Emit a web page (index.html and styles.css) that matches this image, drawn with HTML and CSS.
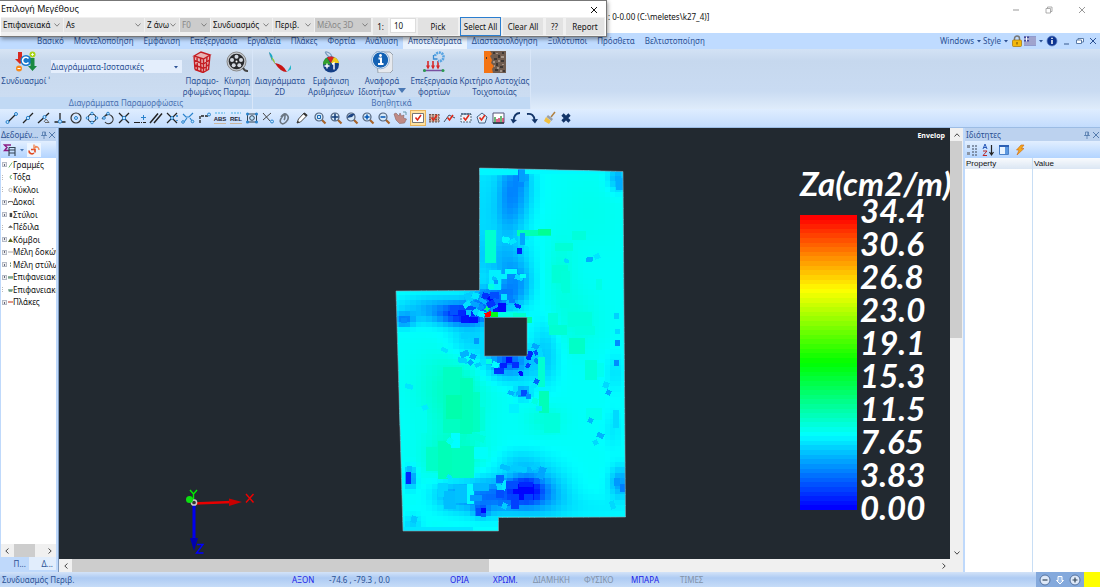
FILE: index.html
```html
<!DOCTYPE html>
<html lang="el">
<head>
<meta charset="utf-8">
<title>0-0.00 (C:\meletes\k27_4)</title>
<link rel="stylesheet" href="styles.css">
</head>
<body>
<svg class="sprite" aria-hidden="true">
  <symbol id="chev" viewBox="0 0 8 8"><path d="M1.5 2.5 4 5.2 6.500 2.500" fill="none" stroke="currentColor" stroke-width="0.9"/></symbol>
  <symbol id="tri" viewBox="0 0 8 8"><path d="M2 3h4L4 5.500z" fill="currentColor"/></symbol>
  <symbol id="close" viewBox="0 0 8 8"><path d="M1 1l6 6M7 1 1 7" fill="none" stroke="currentColor" stroke-width="1"/></symbol>
  <symbol id="pin" viewBox="0 0 8 8"><path d="M2.500 1h3v3.500h-3zM1 4.500h6M4 4.500V8M4.800 1v3.500" fill="none" stroke="currentColor" stroke-width=".8"/></symbol>
  <symbol id="lens" viewBox="0 0 16 14"><path d="m9.500 8.500 4 4" stroke="#a8642a" stroke-width="2.200"/><circle cx="7" cy="6" r="4" fill="#d4e8f8" stroke="#50627c" stroke-width="1.200"/></symbol>
  <symbol id="tick" viewBox="0 0 16 14"><path d="m5.500 6.500 2 2.500 3.500-5" fill="none" stroke="#e02818" stroke-width="1.500"/></symbol>
</svg>

<div class="app">
  <header class="titlebar">
    <h1 class="doc">: 0-0.00 (C:\meletes\k27_4)]</h1>
    <div class="winbtns">
      <button aria-label="Minimize"><svg viewBox="0 0 8 8"><path d="M1 4h6" stroke="#999" fill="none"/></svg></button>
      <button aria-label="Restore"><svg viewBox="0 0 8 8"><path d="M1 2.500h4.500V7H1zM2.500 2.500V1H7v4.500H5.500" stroke="#999" fill="none" stroke-width=".8"/></svg></button>
      <button aria-label="Close"><svg class="grey"><use href="#close"/></svg></button>
    </div>
  </header>

  <nav class="menubar">
    <div class="tabs">
      <button>Βασικό</button><button>Μοντελοποίηση</button><button>Εμφάνιση</button><button>Επεξεργασία</button><button>Εργαλεία</button><button>Πλάκες</button><button>Φορτία</button><button>Ανάλυση</button><button class="on">Αποτελέσματα</button><button>Διαστασιολόγηση</button><button>Ξυλότυποι</button><button>Πρόσθετα</button><button>Βελτιστοποίηση</button>
    </div>
    <div class="menuright">
      <button>Windows <svg class="c8"><use href="#tri"/></svg></button>
      <button>Style <svg class="c8"><use href="#tri"/></svg></button>
      <button aria-label="Lock"><svg class="m12" viewBox="0 0 12 12"><path d="M3.500 6V3.500a2.500 2.500 0 0 1 5 0V6" fill="none" stroke="#777" stroke-width="1.500"/><rect x="1.500" y="5" width="9" height="6.500" rx="1" fill="#f3b80c" stroke="#a47408" stroke-width=".7"/><path d="M6 7v2.500" stroke="#6a4a00"/></svg></button>
      <button aria-label="Language"><svg class="m12" viewBox="0 0 12 12"><path d="M0 1.500h12v9H0z" fill="#fff"/><path d="M0 2h12M0 4h12M0 6h12M0 8h12M0 10h12" stroke="#41489c"/><path d="M0 1.500h5v5H0z" fill="#41489c"/><path d="M2.500 1.500v5M0 4h5" stroke="#fff"/></svg><svg class="c8"><use href="#tri"/></svg></button>
      <button aria-label="Info"><svg class="m12" viewBox="0 0 12 12"><circle cx="6" cy="6" r="5" fill="#0d3490" stroke="#5d7fc4" stroke-width=".7"/><path d="M6 5v4M6 2.700v1.300" stroke="#fff" stroke-width="1.500"/></svg></button>
      <button aria-label="Minimize child"><svg class="c8" viewBox="0 0 8 8"><path d="M1 7h5" stroke="#4d6f9f" stroke-width="1.200"/></svg></button>
      <button aria-label="Restore child"><svg class="c8" viewBox="0 0 8 8"><path d="M.500 3h5v3.500h-5zM2 3V1.500h5.500V5h-2" fill="#fff" stroke="#4d6f9f" stroke-width=".9"/></svg></button>
      <button aria-label="Close child"><svg class="c8"><use href="#close"/></svg></button>
    </div>
  </nav>

  <section class="ribbon">
    <div class="group">
      <div class="items g1">
        <button class="big"><svg viewBox="0 0 22 22"><path d="M3 1h4v7h3L5 13 0 8h3z" fill="#d8291f"/><circle cx="4" cy="17.500" r="3" fill="#f58a1c"/><path d="M2.500 17.500h3" stroke="#fff"/><circle cx="11" cy="9.500" r="5.500" fill="#1879cc"/><path d="M13.500 7.500a3.300 3.300 0 1 0 0 4" fill="none" stroke="#fff" stroke-width="1.600"/><path d="M15.500 7h4v8H22l-4.500 5L13 15h2.500z" fill="#1a8a42"/><circle cx="17.500" cy="3.500" r="3" fill="#a8d418"/><path d="M16 3.500h3M17.500 2v3" stroke="#fff" stroke-width=".8"/></svg><span>Συνδυασμοί ˈ</span></button>
        <label class="combo"><select aria-label="Διάγραμμα"><option>Διαγράμματα-Ισοτασικές</option></select><svg class="c8"><use href="#tri"/></svg></label>
        <button class="big"><svg viewBox="0 0 22 22"><path d="M3 5 10 1l9 3-1.500 15-5.500 3-8-3.500z" fill="#e8b4b4"/><path d="M3 5 10 1l9 3-6.500 4zM3.500 9.500l9 3.500 6-4M4 14l8.500 3.500 5.500-4M4 18.500l8 3 5.500-3M3 5l1 13.500M6 6l.5 14M9.500 7l.5 14M12.500 8v13.500M16 6l-1 14M19 4l-1.500 15" fill="none" stroke="#c41c22" stroke-width="1.400"/></svg><span>Παραμο-<br>ρφωμένος</span></button>
        <button class="big"><svg viewBox="0 0 22 22"><circle cx="10.500" cy="10.500" r="9.500" fill="#c4c8ce" stroke="#888"/><circle cx="10.500" cy="10.500" r="7.800" fill="#28292c"/><g fill="#d5dae2"><circle cx="10.500" cy="5.700" r="2"/><circle cx="15" cy="9" r="2"/><circle cx="13.300" cy="14.300" r="2"/><circle cx="7.700" cy="14.300" r="2"/><circle cx="6" cy="9" r="2"/></g><circle cx="10.500" cy="10.500" r="1" fill="#fff"/><path d="M17 17q2 3.500 5 3" fill="none" stroke="#444" stroke-width="2"/></svg><span>Κίνηση<br>Παραμ.</span></button>
      </div>
      <h2>Διαγράμματα Παραμορφώσεις</h2>
    </div>
    <div class="group">
      <div class="items g2">
        <button class="big"><svg viewBox="0 0 22 22"><path d="M0 1q2 9 10 15" fill="none" stroke="#789" stroke-width=".6"/><path d="M0 1q5 3 3 9Z" fill="#13a6c4"/><path d="M2 6q4 2 4 7z" fill="#8cc820"/><path d="M6 12q8 1 12 9-7 0-12-9z" fill="#c81414"/><path d="M18 21l4-7 .4 4z" fill="#22b8cc"/></svg><span>Διαγράμματα<br>2D</span></button>
        <button class="big"><svg viewBox="0 0 22 22"><path d="M9 6Q3 0 7 1t5 5" fill="none" stroke="#7a9cc0" stroke-width="1.200"/><circle cx="11" cy="13.500" r="8" fill="#143f86"/><path d="M11 13.500H3a8 8 0 0 1 4-7z" fill="#32a02c"/><path d="M11 12 7 6.600a8 8 0 0 1 7-.5z" fill="#d82420"/><path d="m11 12 3-6a8 8 0 0 1 5 6z" fill="#f0cc18"/><path d="M4.500 15h5M7 12.500v5M12 13l2-1v6.500" stroke="#fff" stroke-width="1.400" fill="none"/></svg><span>Εμφάνιση<br>Αριθμήσεων</span></button>
        <button class="big"><svg viewBox="0 0 22 22"><path d="M5 1h14l3 3v15l-3 3H7z" fill="#e6e9ee" stroke="#98a2ae"/><circle cx="9.500" cy="9" r="8.300" fill="#1462b4" stroke="#fff" stroke-width="1.200"/><circle cx="9.500" cy="9" r="8.800" fill="none" stroke="#487eb8" stroke-width=".6"/><circle cx="9.500" cy="4.500" r="1.400" fill="#fff"/><path d="M7.500 7.500h2.500V13m-3 0h5.500" stroke="#fff" stroke-width="2" fill="none"/></svg><span>Αναφορά<br>Ιδιοτήτων <svg class="c8 dn"><path d="M0 1h8L4 6z" fill="#4a78b4"/></svg></span></button>
        <button class="big"><svg viewBox="0 0 22 22"><path d="M0 19.500h20" stroke="#7a50a0" stroke-width="1.500"/><circle cx="1.500" cy="19.500" r="1.500" fill="#2a9b50"/><circle cx="20" cy="19.500" r="1.500" fill="#2a9b50"/><path d="M5 10v7M10 10v7M15 10v7" stroke="#d82828" stroke-width="1.600"/><path d="M3 14.500h4l-2 4zM8 14.500h4l-2 4zM13 14.500h4l-2 4z" fill="#d82828"/><path d="M12 5a4.300 4.300 0 1 1 3 5" fill="none" stroke="#58a4e2" stroke-width="2.600" stroke-dasharray="2 .7"/><path d="M10.500 4v4h4" fill="none" stroke="#388ad2" stroke-width="1.300"/></svg><span>Επεξεργασία<br>φορτίων</span></button>
        <button class="big"><svg viewBox="0 0 22 22"><path d="M0 0h22v22H0z" fill="#705d50"/><path d="M0 0h6l2 3-2 2 2 4-1 3 3 3-2 3 1 4H0z" fill="#f47414"/><g fill="#3e3834"><path d="M9 1h2v2H9zM14 4h2v3h-2zM18 1h2v2h-2zM10 7h3v2h-3zM17 9h3v2h-3zM12 12h2v3h-2zM16 15h3v2h-3zM11 18h3v2h-3zM19 19h2v2h-2zM2 6h1v2H2z"/></g><g fill="#a39488"><path d="M12 2h2v1h-2zM17 5h3v2h-3zM9 10h2v2H9zM14 9h2v2h-2zM18 13h2v1h-2zM13 16h2v2h-2zM10 14h1v2h-1zM16 19h2v2h-2z"/></g></svg><span>Κριτήριο Αστοχίας<br>Τοιχοποιίας</span></button>
      </div>
      <h2>Βοηθητικά</h2>
    </div>
  </section>

  <div class="toolbar" role="toolbar" aria-label="Snap">
    <div class="set">
      <button aria-label="Line end"><svg viewBox="0 0 16 14"><path d="M3 12 12 3" stroke="#222" stroke-width="1.300"/><g fill="#bfe4ff" stroke="#2a82cc"><circle cx="3.500" cy="11" r="1.500"/><circle cx="12" cy="3" r="1.500"/></g></svg></button>
      <button aria-label="Midpoint"><svg viewBox="0 0 16 14"><path d="M3 12 13 2" stroke="#222" stroke-width="1.300"/><circle cx="8" cy="7" r="1.700" fill="#bfe4ff" stroke="#2a82cc"/></svg></button>
      <button aria-label="Nearest"><svg viewBox="0 0 16 14"><path d="M2 12 13 2" stroke="#222" stroke-width="1.300"/><circle cx="8.500" cy="6" r="1.500" fill="#bfe4ff" stroke="#2a82cc"/><path d="M8 11l2-3 3 3.500h-4" stroke="#666" fill="none"/></svg></button>
      <button aria-label="Perpendicular"><svg viewBox="0 0 16 14"><path d="M8 2v9M2.500 11h11" stroke="#222" stroke-width="1.300"/><circle cx="8" cy="10.500" r="1.700" fill="#bfe4ff" stroke="#2a82cc"/></svg></button>
      <button aria-label="Centre"><svg viewBox="0 0 16 14"><circle cx="8" cy="7" r="5" fill="none" stroke="#333" stroke-width="1.200"/><circle cx="8" cy="7" r="1.500" fill="#bfe4ff" stroke="#2a82cc"/></svg></button>
      <button aria-label="Quadrant"><svg viewBox="0 0 16 14"><circle cx="8" cy="7" r="4" fill="none" stroke="#333"/><g fill="#bfe4ff" stroke="#2a82cc"><circle cx="8" cy="2.500" r="1.300"/><circle cx="8" cy="11.500" r="1.300"/><circle cx="3.500" cy="7" r="1.300"/><circle cx="12.500" cy="7" r="1.300"/></g></svg></button>
      <button aria-label="Tangent"><svg viewBox="0 0 16 14"><path d="M2 8 8 2M5 11a4.500 4.500 0 1 0 1-6.500" fill="none" stroke="#333" stroke-width="1.200"/><circle cx="8" cy="2.500" r="1.300" fill="#bfe4ff" stroke="#2a82cc"/><circle cx="4" cy="7" r="1.300" fill="#bfe4ff" stroke="#2a82cc"/></svg></button>
      <button aria-label="Intersection"><svg viewBox="0 0 16 14"><path d="m3 2 10 10M13 2 3 12" stroke="#222" stroke-width="1.300"/><circle cx="8" cy="7" r="1.700" fill="#bfe4ff" stroke="#2a82cc"/></svg></button>
      <button aria-label="Extension"><svg viewBox="0 0 16 14"><path d="M2 11.500h6m1 0h1m1 0h3" stroke="#222"/><path d="M9 6.500h5M11.500 4v5" stroke="#2a82cc"/></svg></button>
      <button aria-label="Parallel"><svg viewBox="0 0 16 14"><path d="m2 12 8-9.500M6 12l8-9.500" stroke="#222" stroke-width="1.500"/></svg></button>
      <button aria-label="Apparent intersection"><svg viewBox="0 0 16 14"><path d="m3 2 10 10M13 2 3 12" stroke="#222" stroke-width="1.200"/><circle cx="8" cy="7" r="1.500" fill="#bfe4ff" stroke="#2a82cc"/><path d="M13 4v2M13 9v1" stroke="#2a82cc" stroke-width="1.500"/></svg></button>
      <button aria-label="Link nodes"><svg viewBox="0 0 16 14"><path d="M3 3l3 3h3l4-4M4 11l3-4M10 7l2 3" stroke="#2a82cc" fill="none" stroke-width="1.200"/><g fill="#bfe4ff" stroke="#2a82cc"><circle cx="3" cy="11" r="1.300"/><circle cx="12.500" cy="10.500" r="1.300"/></g></svg></button>
      <button aria-label="Ortho"><svg viewBox="0 0 16 14"><path d="M4 12V5h8" stroke="#222" fill="none" stroke-dasharray="3 1" stroke-width="1.300"/><circle cx="13" cy="3.500" r="1.500" fill="#bfe4ff" stroke="#2a82cc"/></svg></button>
      <button aria-label="Absolute"><svg viewBox="0 0 16 14"><path d="M3 2h10" stroke="#4bb0e4" stroke-dasharray="2 1"/><path d="M2 12.500h12" stroke="#ccb8a0"/><text x="8" y="9.500" text-anchor="middle" class="tiny">ABS</text></svg></button>
      <button aria-label="Relative"><svg viewBox="0 0 16 14"><path d="M3 2h10" stroke="#4bb0e4" stroke-dasharray="2 1"/><path d="M2 12.500h12" stroke="#ccb8a0"/><text x="8" y="9.500" text-anchor="middle" class="tiny">REL</text></svg></button>
      <button aria-label="Frame"><svg viewBox="0 0 16 14"><path d="M3.500 3h9v8h-9z" fill="none" stroke="#345"/><circle cx="8" cy="7" r="2.300" fill="#bfe4ff" stroke="#345"/><g fill="#2a82cc"><circle cx="3.500" cy="3" r="1.500"/><circle cx="12.500" cy="3" r="1.500"/><circle cx="3.500" cy="11" r="1.500"/><circle cx="12.500" cy="11" r="1.500"/></g></svg></button>
      <button aria-label="Clear snap"><svg viewBox="0 0 16 14"><path d="m3 2 7 8M11 2 3 9" stroke="#444"/><circle cx="12" cy="10.500" r="1.500" fill="#bfe4ff" stroke="#2a82cc"/></svg></button>
      <button aria-label="Attach"><svg viewBox="0 0 16 14"><path d="M5 6q3-5 6-2t-1 7q-3 3-5 1t1-6 3-1-1 4" fill="none" stroke="#6b7682" stroke-width="1.600"/></svg></button>
    </div>
    <div class="set">
      <button aria-label="Pencil"><svg viewBox="0 0 16 14"><path d="m3 12 1.500-4L10 2l3 2.500L6.500 11z" fill="#fff" stroke="#444"/><path d="m3 12 .8-2.200L5.500 11.300zM9 3l3 2.500 1.500-1.500-3-2.500z" fill="#333"/></svg></button>
    </div>
    <div class="set">
      <button aria-label="Zoom window"><svg viewBox="0 0 16 14"><use href="#lens"/><path d="M5.500 4.500h3v3h-3z" fill="none" stroke="#1768b4"/></svg></button>
      <button aria-label="Zoom all"><svg viewBox="0 0 16 14"><use href="#lens"/><path d="M7 2.500v7M3.500 6h7" stroke="#123c78" stroke-width="1.500"/></svg></button>
      <button aria-label="Zoom previous"><svg viewBox="0 0 16 14"><use href="#lens"/><path d="M3 7q2-5 8-4L8 6z" fill="#1c4484"/></svg></button>
      <button aria-label="Zoom in"><svg viewBox="0 0 16 14"><use href="#lens"/><path d="M7 3.500v5M4.500 6h5" stroke="#0054b4" stroke-width="1.500"/></svg></button>
      <button aria-label="Zoom out"><svg viewBox="0 0 16 14"><use href="#lens"/><path d="M4.500 6h5" stroke="#0054b4" stroke-width="1.500"/></svg></button>
      <button aria-label="Pan"><svg viewBox="0 0 16 14"><path d="m2 3 2-1 3 3 1-3 1.500 3L12 4l-.5 3 3 1-2 4-5 .5L4 9z" fill="#c08a84" stroke="#866" stroke-width=".6"/><path d="M11 1h3v3" fill="none" stroke="#69a"/></svg></button>
    </div>
    <div class="set">
      <button class="hot" aria-label="Select"><svg viewBox="0 0 16 14"><path d="M2.500 2.500h11v9h-11z" fill="#fff" stroke="#777"/><use href="#tick"/></svg></button>
      <button aria-label="Select mesh"><svg viewBox="0 0 16 14"><path d="M3 3h10v8H3z" fill="#dcb8a8"/><path d="M3 3.500h10M3 6h10M3 8.500h10M3 11h10M4 3v8M7 3v8M10 3v8M13 3v8" stroke="#6c5a54" stroke-dasharray="2 1"/><use href="#tick"/></svg></button>
      <button aria-label="Select polyline"><svg viewBox="0 0 16 14"><path d="m2 11 5-7 6 3" fill="none" stroke="#456"/><use href="#tick"/></svg></button>
      <button aria-label="Select box"><svg viewBox="0 0 16 14"><path d="M3 3h10v8H3z" fill="#e8f1fa" stroke="#567" stroke-dasharray="2 1"/><path d="M3 3h10" stroke="#246"/><use href="#tick"/></svg></button>
      <button aria-label="Select polygon"><svg viewBox="0 0 16 14"><path d="m8 2 5 4-2 6H5L3 6z" fill="#e4effa" stroke="#468"/><use href="#tick"/></svg></button>
      <button aria-label="Filter"><svg viewBox="0 0 16 14"><path d="M3 2h11v10H3z" fill="#fff" stroke="#557"/><path d="M5 6v6M11 5v7" stroke="#3ca048" stroke-width="1.500"/><path d="M7 8v4M9 7v5M13 7v5" stroke="#d43060" stroke-width="1.500"/><path d="M3 12h11" stroke="#234" stroke-width="1.500"/></svg></button>
    </div>
    <div class="set">
      <button aria-label="Undo"><svg viewBox="0 0 16 14"><path d="M12 2Q6 2 5.500 10" fill="none" stroke="#123468" stroke-width="1.800"/><path d="M2.500 8 5 12.500 9 9z" fill="#123468"/></svg></button>
      <button aria-label="Redo"><svg viewBox="0 0 16 14"><path d="M3 3q7-1 7.500 6" fill="none" stroke="#123468" stroke-width="1.800"/><path d="M7.500 8.500 11 12.500l3-4.500z" fill="#123468"/></svg></button>
    </div>
    <div class="set">
      <button aria-label="Brush"><svg viewBox="0 0 16 14"><path d="m13 1-4 5" stroke="#b08040" stroke-width="1.500"/><path d="m4 6 5 4-2 3-5-3z" fill="#f0c040"/><path d="m6 4 5 4-1.500 2-5-4z" fill="#999fa8"/></svg></button>
      <button aria-label="Delete"><svg viewBox="0 0 16 14"><path d="m4.500 3.500 7 7m0-7-7 7" stroke="#123468" stroke-width="3.200"/></svg></button>
    </div>
  </div>

  <main class="work">
    <aside class="left">
      <div class="phead"><h2>Δεδομέν...</h2><button aria-label="Pin"><svg class="c8"><use href="#pin"/></svg></button><button aria-label="Close panel"><svg class="c8"><use href="#close"/></svg></button></div>
      <div class="ptools">
        <button aria-label="Layers"><svg class="i14" viewBox="0 0 14 14"><path d="M8 2 1.500 2 4 4.500 1.500 7.500h5" fill="none" stroke="#8c1c84" stroke-width="1.500"/><path d="M6 4.500h6v8.500M6 7h6M6 10h6M6 4.500V13" fill="none" stroke="#345" stroke-width="1.100"/></svg></button><svg class="c8 blue"><use href="#tri"/></svg>
        <button class="refresh" aria-label="Refresh"><svg class="i14" viewBox="0 0 14 14"><path d="M2 7.500a3 3 0 0 0 5 2.500M4 6.500h4v3" fill="none" stroke="#e04c24" stroke-width="1.600"/><path d="M12 7a3.500 3.500 0 0 0-4-3.500M7 1.500v4l3-2" fill="none" stroke="#f08858" stroke-width="1.400"/></svg></button>
      </div>
      <ul class="tree">
        <li><i class="plus"></i><svg viewBox="0 0 6 8"><path d="M1 7 5 1" stroke="#5a5"/></svg>Γραμμές</li>
        <li><i></i><svg viewBox="0 0 6 8"><path d="M4.500 2a2 2 0 1 0 0 4" stroke="#494" fill="none"/></svg>Τόξα</li>
        <li><i></i><svg viewBox="0 0 6 8"><circle cx="3" cy="4" r="2" stroke="#aaa" fill="none"/></svg>Κύκλοι</li>
        <li><i class="plus"></i><svg viewBox="0 0 6 8"><path d="M.500 5V3.500h5V5" stroke="#444" fill="none"/></svg>Δοκοί</li>
        <li><i class="plus"></i><svg viewBox="0 0 6 8"><path d="M2 1.500h3v5H2z" fill="#444"/></svg>Στύλοι</li>
        <li><i></i><svg viewBox="0 0 6 8"><path d="M0 5h6L3 2z" fill="#555"/></svg>Πέδιλα</li>
        <li><i class="plus"></i><svg viewBox="0 0 6 8"><path d="M0 6.500h6l-3-5z" fill="#562"/></svg>Κόμβοι</li>
        <li><i class="plus"></i><svg viewBox="0 0 6 8"><path d="M0 4h6" stroke="#999"/></svg>Μέλη δοκών</li>
        <li><i class="plus"></i><svg viewBox="0 0 6 8"><path d="M3 1v6" stroke="#475" stroke-dasharray="2 1"/></svg>Μέλη στύλων</li>
        <li><i class="plus"></i><svg viewBox="0 0 6 8"><path d="M0 3h6v3H0z" fill="#7ba38c"/></svg>Επιφανειακά</li>
        <li><i></i><svg viewBox="0 0 6 8"><path d="M0 3h6L5 6H1z" fill="#689a80"/></svg>Επιφανειακά</li>
        <li><i class="plus"></i><svg viewBox="0 0 6 8"><path d="M0 4h6" stroke="#c54" stroke-width="1.500"/></svg>Πλάκες</li>
      </ul>
      <div class="hscroll"><button aria-label="Scroll left"><svg class="c8 l"><use href="#chev"/></svg></button><span class="thumb"></span><button aria-label="Scroll right"><svg class="c8 r"><use href="#chev"/></svg></button></div>
      <div class="ptabs"><button>Π...</button><button class="on">Δ...</button></div>
    </aside>

    <section class="view">
      <div class="canvas">
        <svg id="scene" class="scene" viewBox="59 128 891 431" role="img" aria-label="Za (cm2/m)">
          <defs><clipPath id="slab"><path d="M479.500 168 623 171.500 625.500 517 498.500 517.500V531H403L396 291l83.500-.5z"/></clipPath></defs>
          <g id="mesh" clip-path="url(#slab)" shape-rendering="crispEdges"></g>
          <path d="M484.500 317.500h42.500v38.500h-42.500z" fill="#222930" stroke="#7c8f9a" stroke-width=".6"/>
          <path d="M479.500 168 623 171.500 625.500 517 498.500 517.500V531H403L396 291l83.500-.5z" fill="none" stroke="#8aa6b4" stroke-width=".6"/>
          <path d="M194 503.500 232 502" stroke="#e80000" stroke-width="2.500"/><path d="M229 498.500 242 502l-13 4z" fill="#c80000"/>
          <path d="M194 503v38" stroke="#0000f0" stroke-width="3"/><path d="M190 538h8l-4 13z" fill="#0000b0"/>
          <circle cx="194" cy="502.500" r="2.600" fill="#333" stroke="#ccc" stroke-width="1.500"/><circle cx="189.500" cy="499.500" r="3.500" fill="#0ce010"/>
          <g fill="none" stroke-width="1.400"><path d="m190 490 3.500 4 3.500-4M193.500 494v5" stroke="#00f000"/><path d="m246 494 7.500 8.500m0-8.500-7.500 8.500" stroke="#f00000"/><path d="M197 544.500h6l-6.500 8.500h7" stroke="#0000ff"/></g>
        </svg>
        <span class="envelop">Envelop</span>
        <div class="legend">
          <h3>Za(cm2/m)</h3>
          <div class="scale">
            <svg id="bar" class="bar" viewBox="0 0 10 64" preserveAspectRatio="none" shape-rendering="crispEdges"></svg>
            <ol><li>34.4</li><li>30.6</li><li>26.8</li><li>23.0</li><li>19.1</li><li>15.3</li><li>11.5</li><li>7.65</li><li>3.83</li><li>0.00</li></ol>
          </div>
        </div>
      </div>
      <div class="vscroll"><button aria-label="Scroll up"><svg class="c8 u"><use href="#chev"/></svg></button><span class="thumb"></span><span class="rest"></span><button aria-label="Scroll down"><svg class="c8"><use href="#chev"/></svg></button></div>
      <div class="hscroll wide"><button aria-label="Scroll left"><svg class="c8 l"><use href="#chev"/></svg></button><span class="thumb"></span><span class="rest"></span><button aria-label="Scroll right"><svg class="c8 r"><use href="#chev"/></svg></button></div>
      <div class="corner"></div>
    </section>

    <aside class="right">
      <div class="phead"><h2>Ιδιότητες</h2><button aria-label="Pin"><svg class="c8"><use href="#pin"/></svg></button><button aria-label="Close panel"><svg class="c8"><use href="#close"/></svg></button></div>
      <div class="ptools">
        <button aria-label="Categorized"><svg class="i14" viewBox="0 0 14 14"><path d="M2 2h3v3H2zM2 9h3v3H2z" fill="#8a95a5"/><path d="M7 3h2m1 0h2M7 6h2m1 0h2M7 9h2m1 0h2M7 12h2m1 0h2" stroke="#6c7a8e" stroke-width="1.500"/></svg></button>
        <button aria-label="Alphabetical"><svg class="i14" viewBox="0 0 14 14"><path d="m2 6 2-5 2 5M2.500 4.500h3" fill="none" stroke="#2a5ab8"/><path d="M2 8h4l-4 4.500h4" fill="none" stroke="#b82828"/><path d="M10.500 2v9M8.500 9l2 3 2-3" fill="none" stroke="#222" stroke-width="1.200"/></svg></button>
        <button aria-label="Pages"><svg class="i14" viewBox="0 0 14 14"><path d="M2.500 2.500h9v9h-9z" fill="#e8f3ff" stroke="#4a80c8"/><path d="M2 3h10" stroke="#2c60b4" stroke-width="2"/><path d="M8 4h3v7H8z" fill="#5c98e0"/></svg></button>
        <button aria-label="Events"><svg class="i14" viewBox="0 0 14 14"><path d="M8 2h3L8.500 5.500H11L4 12l2-5H3.500z" fill="#f4a81c" stroke="#cc6410" stroke-width=".6"/></svg></button>
      </div>
      <table class="props"><thead><tr><th>Property</th><th>Value</th></tr></thead><tbody><tr><td></td><td></td></tr></tbody></table>
    </aside>
  </main>

  <footer class="status">
    <span>Συνδυασμός Περιβ.</span>
    <button class="act">ΑΞΟΝ</button><output>-74.6 , -79.3 , 0.0</output>
    <button class="act">ΟΡΙΑ</button><button class="act">ΧΡΩΜ.</button><button>ΔΙΑΜΗΚΗ</button><button>ΦΥΣΙΚΟ</button><button class="act">ΜΠΑΡΑ</button><button>ΤΙΜΕΣ</button>
    <div class="zoomer">
      <button aria-label="Decrease"><svg viewBox="0 0 12 12"><circle cx="6" cy="6" r="5" fill="#dde8f8" stroke="#5573a0"/><path d="M3.500 6h5" stroke="#345" stroke-width="1.200"/></svg></button>
      <button aria-label="Slider"><svg viewBox="0 0 12 12"><path d="M4 2.500h4v4h1.500L6 10 2.500 6.500H4z" fill="#9dbde8" stroke="#fff"/></svg></button>
      <button aria-label="Increase"><svg viewBox="0 0 12 12"><circle cx="6" cy="6" r="5" fill="#dde8f8" stroke="#5573a0"/><path d="M3.500 6h5M6 3.500v5" stroke="#345" stroke-width="1.200"/></svg></button>
    </div>
    <div class="flag"></div>
  </footer>
</div>

<form class="dialog" aria-label="Επιλογή Μεγέθους">
  <div class="dhead"><h2>Επιλογή Μεγέθους</h2><button type="button" aria-label="Close dialog"><svg class="c8"><use href="#close"/></svg></button></div>
  <div class="dbody">
    <label class="pick"><select aria-label="Τύπος"><option>Επιφανειακά</option></select><svg class="c8"><use href="#chev"/></svg></label>
    <label class="pick"><select aria-label="Μέγεθος"><option>As</option></select><svg class="c8"><use href="#chev"/></svg></label>
    <label class="pick"><select aria-label="Άξονας"><option>Z άνω</option></select><svg class="c8"><use href="#chev"/></svg></label>
    <label class="pick off"><select aria-label="Φόρτιση" disabled><option>F0</option></select><svg class="c8"><use href="#chev"/></svg></label>
    <label class="pick"><select aria-label="Συνδυασμός"><option>Συνδυασμός</option></select><svg class="c8"><use href="#chev"/></svg></label>
    <label class="pick"><select aria-label="Περιβάλλουσα"><option>Περιβ.</option></select><svg class="c8"><use href="#chev"/></svg></label>
    <label class="pick off"><select aria-label="Μέλος" disabled><option>Μέλος 3D</option></select><svg class="c8"><use href="#chev"/></svg></label>
    <label class="ratio" for="ratio">1:</label><input id="ratio" type="text" value="10">
    <button type="button">Pick</button><button type="button" class="focus">Select All</button><button type="button">Clear All</button><button type="button">??</button><button type="button">Report</button>
  </div>
</form>
<script src="scene.js"></script>
</body>
</html>
```

FILE: styles.css
```css
* { box-sizing: border-box; }
body { margin: 0; font: 8px/12px "Noto Sans", "Open Sans", sans-serif; color: #111; }
h1, h2, h3, ul, ol { margin: 0; padding: 0; font: inherit; list-style: none; }
button, select, input { font: inherit; color: inherit; margin: 0; padding: 0; border: 0; background: none; border-radius: 0; }
button { display: flex; align-items: center; justify-content: center; white-space: nowrap; }
svg { flex: none; display: block; }
.sprite { position: absolute; width: 0; height: 0; }
.c8 { width: 8px; height: 8px; }
.i14 { width: 14px; height: 14px; }
.m12 { width: 12px; height: 12px; }
.l { transform: rotate(90deg); }
.r { transform: rotate(-90deg); }
.u { transform: rotate(180deg); }
.grey { color: #999; }
.tiny { font: bold 6px "Liberation Sans", sans-serif; fill: #223; }

.app { display: flex; flex-direction: column; height: 100vh; overflow: hidden; background: #bfdbff; }

.titlebar { display: flex; justify-content: space-between; height: 33px; flex: none; background: #fff; }
.doc { padding: 11px 0 0 608px; white-space: pre; }
.winbtns { display: flex; padding: 4px 2px 0 0; height: 16px; }
.winbtns button { width: 33px; }
.winbtns svg { width: 8px; height: 8px; }

.menubar { display: flex; justify-content: space-between; height: 16px; flex: none; background: #bfdbff; color: #2b5194; }
.tabs { display: flex; padding-left: 32px; }
.tabs button { padding: 0 5px; }
.tabs .on { background: #e9f2fd; }
.menuright { display: flex; align-items: center; padding-right: 3px; }
.menuright button:nth-child(n+6) { margin-left: 4px; }
.menuright svg { margin-left: 1px; }

.ribbon { display: flex; flex: none; height: 60px; background: linear-gradient(#d3e2f4, #c6d8ee 20%, #c9dbf2 70%, #dfecfb); color: #2b5194; }
.group { display: flex; flex-direction: column; border-right: 1px solid #d8e6f8; background: linear-gradient(#d7e4f4, #c7d8ed 20%, #cddef3); }
.group h2 { height: 12px; background: #c1d9f4; color: #4a72b2; text-align: center; }
.items { display: grid; flex: 1; align-items: start; }
.g1 { grid-template-columns: 51px 131px 40px 30px; }
.g2 { grid-template-columns: 54px 48px 54px 50px 71px; }
.big { flex-direction: column; gap: 2px; padding-top: 2px; line-height: 11px; }
.big > svg { width: 22px; height: 22px; }
.big .dn { display: inline-block; }
.combo, .pick { display: grid; grid-template-columns: 1fr 10px; align-items: center; }
.combo select, .pick select { appearance: none; grid-area: 1 / 1 / 2 / 3; width: 100%; min-width: 0; opacity: 1; }
.combo svg, .pick svg { grid-area: 1 / 2; pointer-events: none; }
.combo { height: 13px; margin-top: 11px; background: #e4eefc; }

.toolbar { display: flex; gap: 2px; flex: none; height: 19px; padding: 0 4px; background: linear-gradient(#dfedff, #c3dcfd); border-bottom: 1px solid #9cbce4; }
.set { display: flex; align-items: center; }
.set button { width: 16px; height: 16px; }
.set svg { width: 16px; height: 14px; }
.set .hot { background: #ffe2a0; outline: 1px solid #e8b45c; outline-offset: -1px; }

.work { display: grid; grid-template-columns: 58px 1fr 137px; flex: 1; min-height: 0; }
.left { display: flex; flex-direction: column; padding: 0 2px 0 1px; min-width: 0; background: #bfd9fb; }
.phead { display: flex; align-items: center; gap: 1px; flex: none; height: 13px; background: #bcd2ef; color: #2b5194; }
.phead h2 { flex: 1; white-space: nowrap; padding-left: 1px; }
.phead button { color: #557cae; }
.left .phead { gap: 0; }
.left .phead h2 { padding: 0; }
.ptools { display: flex; align-items: center; flex: none; gap: 2px; height: 17px; padding-left: 1px; background: linear-gradient(#e2efff, #b3d4ff); }
.left .ptools { gap: 1px; padding-left: 2px; }
.blue { color: #4a78b4; }
.left .refresh { background: #eef6ff; }
.tree { flex: 1; overflow: hidden; background: #fff; white-space: nowrap; line-height: 12px; }
.tree li { display: flex; align-items: center; height: 12px; }
.tree li:nth-child(odd) { height: 13px; }
.tree i { width: 5px; height: 5px; flex: none; margin: 0 1px; border-left: 1px dotted #bbb; }
.tree .plus { border: 1px solid #b4bac6; background: radial-gradient(#667 1px, #eee 1px); }
.tree svg { width: 5px; height: 8px; }
.hscroll { display: flex; flex: none; height: 13px; background: #f0f0f0; color: #333; }
.hscroll button { width: 13px; }
.hscroll .thumb { background: #cdcdcd; width: 22px; }
.left .hscroll { justify-content: space-between; }
.left .hscroll .thumb { margin-right: 8px; }
.ptabs { display: flex; flex: none; height: 15px; padding-bottom: 2px; color: #2b5194; }
.ptabs button { flex: 1; padding-left: 10px; }
.ptabs .on { background: #e1edfc; }

.view { display: grid; grid-template: 1fr 13px / 1fr 13px; min-width: 0; min-height: 0; border-left: 1px solid #7b98bd; }
.canvas { position: relative; overflow: hidden; min-width: 0; min-height: 0; background: #222930; color: #fff; }
.scene { position: absolute; inset: 0; width: 100%; height: 100%; }
.envelop { position: absolute; right: 5px; top: 2px; font: bold 7px/12px "Open Sans", sans-serif; }
.legend { position: absolute; left: 741px; top: 40px; font: italic bold 33px/33px Lato, sans-serif; }
.legend h3 { line-height: 30px; }
.scale { display: flex; align-items: flex-start; gap: 3px; }
.scale ol { margin-top: -4px; }
.bar { width: 57px; height: 295px; margin-top: 17px; }
.vscroll { display: flex; flex-direction: column; background: #f0f0f0; color: #333; }
.vscroll button { height: 13px; }
.vscroll .thumb { flex: 197; background: #cdcdcd; margin: 0 1px 0 0; }
.vscroll .rest { flex: 209; }
.wide .thumb { flex: 417; }
.wide .rest { flex: 448; }
.corner { background: #f0f0f0; }

.right { display: flex; flex-direction: column; min-width: 0; border-left: 2px solid #bfd9fb; }
.right .ptools { padding-left: 0; }
.props { flex: 1; width: 100%; border-collapse: collapse; table-layout: fixed; background: #fff; font: 8px/10px "Liberation Sans", sans-serif; }
.props th { height: 11px; padding: 0 1px; text-align: left; font-weight: normal; background: linear-gradient(#f8fafd, #dbe6f3); }
.props th + th, .props td + td { border-left: 1px solid #c8def5; }
.props td { height: 100%; }

.status { display: grid; flex: none; grid-template-columns: 290px 37px 121px 43px 40px 51px 47px 49px 1fr 48px 16px; align-items: center; height: 15px; padding-left: 2px; background: linear-gradient(#d3e3f8, #aecbf3 40%, #c6dcf8); color: #2b5194; }
.status > button { justify-content: flex-start; color: #8292a8; }
.status > .act { color: #1c1ce8; }
.zoomer { display: flex; align-self: stretch; align-items: center; justify-content: space-evenly; background: #84a9dc; }
.zoomer svg { width: 12px; height: 12px; }
.flag { align-self: stretch; background: #ff0; }

.dialog { position: absolute; left: 0; top: 0; width: 607px; padding: 1px 1px 0; height: 37px; border: 1px solid #777; border-left-width: 0; background: #fff; box-shadow: 1px 2px 4px #0006; }
.dhead { display: flex; justify-content: space-between; height: 15px; padding-right: 7px; line-height: 14px; }
.dhead h2 { font-size: 9px; }
.dbody { display: grid; grid-template-columns: 62px 80px 34px 30px 61px 41px 56px 17px 26px 42px 41px 42px 19px 40px; column-gap: 1px; height: 19px; align-items: stretch; background: #f0f0f0; }
.pick { height: 14px; margin-top: 1px; background: #e3e3e3; }
.pick select { padding-left: 2px; height: 14px; }
.pick svg { color: #777; }
.off { background: #ccc; color: #888; }
.ratio { display: flex; align-items: center; justify-content: center; background: #e2e2e2; margin: 1px; }
.dbody input { min-width: 0; background: #fff; margin: 1px 0 3px; padding-left: 3px; border: 1px solid #ddd; }
.dbody > button { background: #e2e2e2; margin: 1px; }
.dbody > .focus { outline: 1px solid #2b7ed0; }
```

FILE: scene.js
```js
const NS = 'http://www.w3.org/2000/svg';
const mesh = document.getElementById('mesh');
const bar = document.getElementById('bar');

function add(parent, tag, attrs) {
  const el = document.createElementNS(NS, tag);
  for (const k in attrs) el.setAttribute(k, attrs[k]);
  parent.appendChild(el);
}

// 0 blue, 1 cyan, 2 green, 3 yellow, 4 red
function colour(v) {
  v = Math.max(0, Math.min(4, v));
  const c = n => Math.round(255 * Math.max(0, Math.min(1, n)));
  return `rgb(${c(v - 2)},${v > 3 ? c(4 - v) : c(v)},${c(2 - v)})`;
}

for (let i = 0; i < 64; i++) {
  add(bar, 'rect', { x: 0, y: i, width: 10, height: 1, fill: colour(4 - i / 15.75) });
}

// Smooth field: centre x, centre y, spread x, spread y, amount
const blobs = [
  [513, 188, 13, 22, -.48], [507, 220, 12, 16, -.2], [522, 175, 4, 6, -.25], [483, 215, 6, 60, -.12],
  [618, 178, 7, 9, -.35], [465, 315, 17, 7, -.7], [440, 309, 30, 10, -.35], [404, 320, 7, 5, -.45],
  [493, 298, 15, 8, -.5], [515, 284, 12, 14, -.4], [505, 258, 17, 16, -.28], [470, 340, 16, 14, -.22],
  [508, 358, 13, 8, -.6], [510, 372, 18, 9, -.25], [523, 393, 5, 4, -.5], [545, 352, 10, 22, -.22],
  [525, 490, 12, 9, -.75], [512, 496, 26, 13, -.38], [545, 490, 18, 18, -.25], [483, 497, 16, 12, -.35],
  [520, 463, 16, 10, -.18], [452, 495, 14, 11, -.3], [481, 511, 5, 4, -.4], [410, 478, 4, 7, -.5],
  [621, 482, 8, 11, -.4], [615, 372, 7, 14, -.12], [613, 430, 7, 14, -.1], [590, 508, 35, 10, -.08],
  [412, 526, 7, 8, -.2], [455, 398, 22, 32, .2], [453, 456, 20, 15, .2], [545, 420, 14, 10, .12],
  [590, 215, 22, 28, .05], [560, 270, 10, 22, .1], [575, 320, 18, 22, .1], [440, 380, 28, 20, .04]
];
const step = 5.4;
for (let y = 165; y < 534; y += step) {
  for (let x = 394; x < 628; x += step) {
    let v = 1.02;
    for (const [cx, cy, sx, sy, a] of blobs) {
      v += a * Math.exp(-(((x + 2.7 - cx) / sx) ** 2 + ((y + 2.7 - cy) / sy) ** 2) / 2);
    }
    add(mesh, 'rect', { x, y, width: step + .5, height: step + .5, fill: colour(v) });
  }
}

// Single elements: x, y, width, height, value, turn in degrees
const cells = [
  [479, 168, 39, 7, .97, 0], [525, 169, 80, 5, .98, 0], [519, 169, 6, 13, .62, 0], [616, 178, 7, 12, .68, 0],
  [517, 230, 34, 6, 1.3, 0], [538, 229, 13, 6, 1.42, 0], [485, 230, 11, 33, 1.18, 0], [572, 231, 14, 9, 1.14, 0],
  [555, 243, 18, 8, 1.16, 0], [552, 265, 16, 18, 1.16, 0], [561, 271, 9, 22, 1.15, 0], [596, 279, 6, 11, 1.1, 0],
  [502, 237, 8, 6, .98, 12], [509, 239, 7, 5, .9, -30], [523, 240, 8, 6, .95, 20], [520, 233, 5, 12, .65, 5],
  [517, 248, 5, 6, .12, 0], [586, 257, 7, 5, .68, -12], [594, 254, 6, 5, .9, -25], [564, 259, 5, 4, .85, 20],
  [505, 269, 12, 5, .98, 0], [501, 274, 6, 5, .95, 0], [515, 275, 8, 5, .86, 20], [520, 274, 6, 4, 1.03, 0],
  [489, 270, 12, 20, .94, 0], [492, 277, 5, 4, .75, 35], [488, 284, 6, 5, 1.12, -10], [494, 280, 4, 4, .6, 0],
  [480, 291, 7, 7, .55, -25], [482, 293, 7, 6, .2, 15], [488, 296, 6, 5, .02, 40], [490, 292, 9, 7, .3, 0],
  [493, 299, 7, 5, .4, 20], [487, 301, 8, 6, .2, -25], [479, 299, 8, 4, .7, 30], [476, 305, 8, 5, .55, -25],
  [493, 307, 12, 5, .08, -25], [498, 303, 8, 9, .03, 0], [501, 294, 6, 6, .88, 10], [506, 301, 8, 4, .75, 20],
  [514, 304, 7, 4, .18, 20], [510, 305, 5, 4, .8, -20], [509, 299, 6, 4, .5, 0],
  [465, 293, 7, 9, .8, -25], [472, 293, 7, 6, .9, 15], [463, 302, 8, 5, .88, -35], [471, 302, 8, 5, .65, 20],
  [466, 310, 5, 7, .75, 10], [473, 309, 6, 6, .85, -30], [469, 317, 9, 6, .05, 0], [461, 315, 8, 8, .08, 0],
  [457, 310, 8, 6, .15, 0], [450, 305, 8, 10, .32, 0], [478, 311, 7, 6, .95, 15], [401, 318, 6, 5, .55, 0],
  [485, 307, 4, 4, 1.5, 30], [485, 312, 7, 5, 4, -20], [491, 312, 7, 5, 1.9, 0], [498, 312, 19, 5, 1.1, 0],
  [513, 313, 13, 4, 1.2, 0], [527, 317, 5, 6, 1.35, 0], [548, 313, 10, 12, 1.15, 0], [568, 312, 24, 15, 1.14, 0],
  [549, 325, 18, 10, 1.18, 0], [575, 326, 20, 9, 1.12, 0], [569, 338, 16, 16, 1.22, 0], [560, 300, 9, 8, 1.12, 0],
  [556, 290, 6, 6, 1.1, -20], [615, 340, 5, 6, .55, 0], [614, 313, 5, 6, .82, 0], [615, 329, 5, 5, .85, 0],
  [474, 338, 5, 6, .6, 0], [461, 333, 7, 6, .82, 0], [441, 348, 7, 4, .88, 25], [460, 351, 9, 6, .7, -20],
  [470, 354, 6, 5, .6, 20], [458, 358, 9, 5, .82, 10], [468, 360, 5, 5, .65, 45], [475, 363, 6, 4, .8, -25],
  [453, 370, 7, 5, .85, 30], [458, 374, 4, 6, .8, -20], [486, 359, 6, 5, 1.12, 10], [492, 362, 7, 6, 1, 20],
  [506, 357, 6, 6, .05, 0], [500, 363, 7, 5, .12, 0], [512, 362, 7, 6, .18, 0], [494, 368, 10, 6, .2, 0],
  [527, 351, 5, 9, .15, 20], [534, 350, 5, 5, .3, -25], [532, 344, 7, 5, .65, 20], [538, 348, 5, 12, .85, -15],
  [526, 363, 4, 5, .25, 35], [530, 367, 5, 4, .8, -20], [519, 371, 4, 5, .05, -20], [534, 359, 5, 4, .5, 40],
  [538, 357, 7, 30, 1.18, 0], [534, 379, 5, 5, .4, 25], [531, 384, 6, 4, .9, -15], [508, 391, 6, 4, .7, 25],
  [516, 391, 7, 4, .7, -12], [521, 390, 6, 6, .3, 0], [526, 394, 5, 5, .55, 0], [539, 391, 10, 22, 1.28, 0],
  [532, 398, 6, 6, 1.12, 20], [536, 406, 6, 5, .94, -10], [544, 413, 16, 20, 1.14, 0], [509, 404, 10, 9, .95, 0],
  [443, 367, 19, 66, 1.24, 0], [460, 378, 13, 56, 1.28, 0], [473, 392, 7, 40, 1.24, 0], [480, 407, 5, 24, 1.15, 0],
  [446, 395, 16, 24, 1.32, 0], [415, 407, 12, 26, 1.06, 0], [422, 405, 6, 5, .93, -20], [405, 384, 8, 5, .9, 15],
  [426, 447, 16, 24, 1.22, 0], [438, 441, 14, 38, 1.28, 0], [452, 446, 22, 32, 1.26, 0], [462, 434, 4, 12, 1.2, 10],
  [451, 433, 9, 15, 1, 0], [447, 438, 6, 6, 1.06, 30], [471, 434, 14, 7, 1.15, 20], [474, 447, 14, 12, 1.02, 0],
  [407, 466, 5, 6, .75, 0], [406, 472, 5, 12, .15, 0], [411, 478, 5, 6, .65, 0], [447, 475, 5, 4, .9, 25],
  [438, 483, 10, 14, .84, 0], [444, 491, 12, 18, .74, 0], [455, 485, 12, 18, .76, 0], [467, 484, 7, 20, .98, 0],
  [473, 483, 16, 8, .72, 0], [470, 495, 12, 6, .6, 0], [496, 475, 8, 8, .4, 0], [501, 480, 5, 14, .9, 25],
  [497, 484, 5, 9, .85, -10], [496, 490, 8, 8, .3, 0], [506, 481, 12, 8, .3, 0], [519, 482, 14, 5, .15, 0],
  [519, 488, 14, 6, .01, 0], [524, 494, 9, 6, .25, 0], [511, 494, 8, 15, .25, 0], [498, 500, 12, 6, .45, 0],
  [502, 503, 5, 6, .8, 20], [476, 508, 5, 8, .3, 0], [481, 508, 5, 5, .02, 0], [481, 513, 5, 4, .4, 0],
  [538, 467, 7, 12, .65, 20], [500, 465, 10, 5, .75, 20], [511, 466, 16, 6, .8, 10], [531, 465, 6, 5, .8, -20],
  [585, 360, 12, 20, 1.15, 0], [597, 363, 7, 14, 1.06, 0], [614, 360, 5, 6, .55, 0], [606, 390, 5, 5, .65, 25],
  [603, 382, 6, 6, .85, 20], [586, 408, 16, 12, 1.07, 0], [588, 418, 5, 5, .72, 25], [597, 433, 7, 5, .7, 20],
  [593, 440, 5, 5, .85, -20], [613, 410, 6, 18, .85, 0], [614, 478, 6, 8, .6, 0], [620, 484, 5, 8, .5, 0],
  [610, 501, 5, 8, .85, -20], [411, 516, 6, 7, .78, 15], [403, 527, 70, 5, .9, 0]
];
for (const [x, y, width, height, v, turn] of cells) {
  add(mesh, 'rect', { x, y, width, height, fill: colour(v), transform: `rotate(${turn} ${x + width / 2} ${y + height / 2})` });
}
```
